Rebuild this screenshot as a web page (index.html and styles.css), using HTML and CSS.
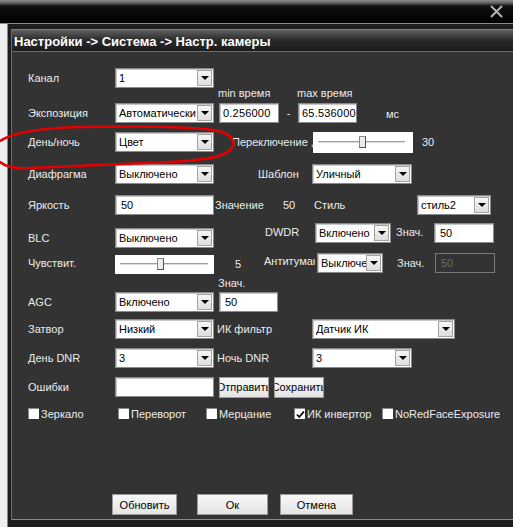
FILE: index.html
```html
<!DOCTYPE html>
<html>
<head>
<meta charset="utf-8">
<link rel="stylesheet" href="styles.css">
</head>
<body>
<div class="topbar">
  <svg class="close" width="13" height="13" viewBox="0 0 13 13"><path d="M1 1L12 12M12 1L1 12" stroke="#b4b4b4" stroke-width="2"/></svg>
</div>
<div class="frame">
  <div class="strip"></div>
  <div class="panel">
    <div class="inner">
      <div class="titlebar">Настройки -&gt; Система -&gt; Настр. камеры</div>
      <div class="form">
        <div class="row r1">
          <span class="lbl">Канал</span>
          <div class="sel w99"><span class="val">1</span><span class="arr"></span></div>
        </div>
        <div class="sub sub1"><span class="s-min">min время</span><span class="s-max">max время</span></div>
        <div class="row r2">
          <span class="lbl">Экспозиция</span>
          <div class="sel w99"><span class="val">Автоматически</span><span class="arr"></span></div>
          <div class="inp w60 ml5 mono">0.256000</div>
          <span class="dash">-</span>
          <div class="inp w59 mono">65.536000</div>
          <span class="ms">мс</span>
        </div>
        <div class="row r3">
          <span class="lbl">День/ночь</span>
          <div class="sel w99"><span class="val">Цвет</span><span class="arr"></span></div>
          <span class="clip switch-lbl">Переключение ,</span>
          <div class="slider s-big"><span class="thumb"></span></div>
          <span class="num30">30</span>
        </div>
        <div class="row r4">
          <span class="lbl">Диафрагма</span>
          <div class="sel w99"><span class="val">Выключено</span><span class="arr"></span></div>
          <span class="tpl-lbl">Шаблон</span>
          <div class="sel w100"><span class="val">Уличный</span><span class="arr"></span></div>
        </div>
        <div class="row r5">
          <span class="lbl">Яркость</span>
          <div class="inp w99">50</div>
          <span class="val-lbl">Значение</span>
          <span class="val-num">50</span>
          <span class="style-lbl">Стиль</span>
          <div class="sel w74"><span class="val">стиль2</span><span class="arr"></span></div>
        </div>
        <div class="row r6">
          <span class="lbl low">BLC</span>
          <div class="sel w99 low"><span class="val">Выключено</span><span class="arr"></span></div>
          <span class="dwdr-lbl">DWDR</span>
          <div class="sel w76"><span class="val">Включено</span><span class="arr"></span></div>
          <span class="zn-lbl">Знач.</span>
          <div class="inp w60">50</div>
        </div>
        <div class="row r7">
          <span class="lbl">Чувствит.</span>
          <div class="slider s-small"><span class="thumb"></span></div>
          <span class="num5">5</span>
          <span class="clip fog-lbl">Антитуман</span>
          <div class="sel w66"><span class="val">Выключено</span><span class="arr"></span></div>
          <span class="zn-lbl">Знач.</span>
          <div class="inp w60 disabled">50</div>
        </div>
        <div class="sub sub2"><span>Знач.</span></div>
        <div class="row r8">
          <span class="lbl">AGC</span>
          <div class="sel w99"><span class="val">Включено</span><span class="arr"></span></div>
          <div class="inp w59 ml5">50</div>
        </div>
        <div class="row r9">
          <span class="lbl">Затвор</span>
          <div class="sel w99"><span class="val">Низкий</span><span class="arr"></span></div>
          <span class="mid-lbl">ИК фильтр</span>
          <div class="sel w143"><span class="val">Датчик ИК</span><span class="arr"></span></div>
        </div>
        <div class="row r10">
          <span class="lbl">День DNR</span>
          <div class="sel w99"><span class="val">3</span><span class="arr"></span></div>
          <span class="mid-lbl">Ночь DNR</span>
          <div class="sel w100"><span class="val">3</span><span class="arr"></span></div>
        </div>
        <div class="row r11">
          <span class="lbl">Ошибки</span>
          <div class="inp w99"></div>
          <div class="btn w50 ml5">Отправить</div>
          <div class="btn w50 ml5">Сохранить</div>
        </div>
        <div class="checks">
          <label class="chk c1"><span class="box"></span>Зеркало</label>
          <label class="chk c2"><span class="box"></span>Переворот</label>
          <label class="chk c2"><span class="box"></span>Мерцание</label>
          <label class="chk c2"><span class="box"><svg width="9" height="9" viewBox="0 0 9 9"><path d="M1 4.5L3.3 7L8 1.5" stroke="#000" stroke-width="1.8" fill="none"/></svg></span>ИК инвертор</label>
          <label class="chk"><span class="box"></span>NoRedFaceExposure</label>
        </div>
        <div class="actions">
          <div class="btn b-upd">Обновить</div>
          <div class="btn b-ok">Ок</div>
          <div class="btn b-cancel">Отмена</div>
        </div>
      </div>
    </div>
  </div>
</div>
<svg class="annot" width="240" height="60" viewBox="0 120 240 60">
  <path d="M0 141 C 14 132 40 128 80 127 C 130 126 185 126 214 130 C 230 133 236 140 232 148 C 226 157 205 160 170 162 C 120 164 70 166 30 168 C 15 169 5 166 0 162" fill="none" stroke="#e40000" stroke-width="2.6" stroke-linecap="round"/>
</svg>
</body>
</html>
```
FILE: styles.css
```css
html, body {
  margin: 0;
  padding: 0;
}
body {
  width: 513px;
  height: 527px;
  overflow: hidden;
  background: #262626;
  font-family: "Liberation Sans", Arial, sans-serif;
  font-size: 11px;
  color: #ececec;
  position: relative;
}
.topbar {
  height: 23px;
  background: linear-gradient(#8e8e8e 0, #606060 3px, #101010 6px, #000 23px);
  display: flex;
  justify-content: flex-end;
  align-items: center;
  padding-right: 10px;
}
.close {
  display: block;
}
.frame {
  display: flex;
  height: 503px;
  border-top: 1px solid #8a8a8a;
}
.strip {
  width: 7px;
  background: #efefef;
}
.panel {
  flex: 1;
  border-left: 1px solid #8a8a8a;
  padding-left: 3px;
  padding-top: 5px;
  background: #1e1e1e;
}
.inner {
  height: 490px;
  border-left: 1px solid #6e6e6e;
  border-bottom: 1px solid #8c8c8c;
  background: #333333;
}
.titlebar {
  height: 21px;
  border-top: 1px solid #7e7e7e;
  border-bottom: 1px solid #6c6c6c;
  background: linear-gradient(#606060 0, #4a4a4a 4px, #2a2a2a 10px, #1c1c1c 21px);
  color: #fff;
  font-weight: bold;
  font-size: 13px;
  line-height: 23px;
  padding-left: 2px;
  white-space: nowrap;
}
.form {
  padding-left: 16px;
}
.row {
  display: flex;
  align-items: center;
  height: 20px;
}
.lbl {
  width: 87px;
  flex: none;
}
.r1 { margin-top: 16px; }
.sub {
  height: 10px;
  line-height: 10px;
  display: flex;
}
.s-min { margin-left: 190px; width: 79px; }
.r2 { margin-top: 5px; }
.r3 { margin-top: 9px; }
.r4 { margin-top: 12px; }
.r5 { margin-top: 11px; }
.r6 { margin-top: 8px; height: 25px; align-items: flex-start; }
.r6 .lbl.low { line-height: 20px; margin-top: 5px; }
.r6 .sel.low { margin-top: 5px; }
.r6 .dwdr-lbl, .r6 .zn-lbl { line-height: 20px; margin-top: -1px; }
.r7 { margin-top: 4px; height: 21px; }
.sub2 { margin-top: 4px; height: 12px; line-height: 12px; padding-left: 190px; }
.r8 { margin-top: 3px; }
.r9 { margin-top: 7px; }
.r10 { margin-top: 9px; }
.r11 { margin-top: 9px; }

.sel {
  display: flex;
  align-items: center;
  height: 20px;
  box-sizing: border-box;
  background: #fff;
  border: 1px solid #8a8a8a;
  box-shadow: inset 1px 1px 0 #c8c8c8;
  color: #000;
  padding-left: 3px;
  flex: none;
}
.val {
  flex: 1;
  overflow: hidden;
  white-space: nowrap;
}
.arr {
  width: 15px;
  height: 16px;
  box-sizing: border-box;
  border: 1px solid #a4a4a4;
  background: linear-gradient(#f6f6f6, #dedede);
  margin-right: 1px;
  display: flex;
  align-items: center;
  justify-content: center;
  flex: none;
}
.arr::after {
  content: "";
  border-left: 4px solid transparent;
  border-right: 4px solid transparent;
  border-top: 4px solid #000;
}
.inp {
  height: 20px;
  box-sizing: border-box;
  border: 1px solid #8a8a8a;
  box-shadow: inset 1px 1px 0 #c8c8c8;
  background: #fff;
  color: #000;
  padding-left: 5px;
  line-height: 18px;
  flex: none;
  white-space: nowrap;
  overflow: hidden;
}
.inp.disabled {
  background: #333;
  border-color: #7a7a7a;
  box-shadow: none;
  color: #6a6a6a;
}
.mono { letter-spacing: 0.2px; padding-left: 3px; }
.w50 { width: 50px; }
.w59 { width: 59px; }
.w60 { width: 60px; }
.w66 { width: 66px; }
.w74 { width: 74px; }
.w76 { width: 76px; }
.w99 { width: 99px; }
.w100 { width: 100px; }
.w143 { width: 143px; }
.ml5 { margin-left: 5px; }
.dash { width: 19px; text-align: center; flex: none; }
.ms { margin-left: 29px; margin-top: 2px; }
.clip { overflow: hidden; white-space: nowrap; flex: none; }
.switch-lbl { margin-left: 18px; width: 81px; }
.slider {
  flex: none;
  background: #fff;
  display: flex;
  align-items: center;
  box-sizing: border-box;
}
.s-big {
  width: 100px;
  height: 21px;
  padding-left: 46px;
  background-image: linear-gradient(to bottom, transparent 9px, #a0a0a0 9px, #a0a0a0 10px, #dcdcdc 10px, #dcdcdc 11px, transparent 11px);
  background-size: 87px 21px;
  background-position: 5px 0;
  background-repeat: no-repeat;
}
.s-small {
  width: 99px;
  height: 19px;
  margin-top: 3px;
  padding-left: 42px;
  background-image: linear-gradient(to bottom, transparent 8px, #a0a0a0 8px, #a0a0a0 9px, #dcdcdc 9px, #dcdcdc 10px, transparent 10px);
  background-size: 88px 19px;
  background-position: 5px 0;
  background-repeat: no-repeat;
}
.thumb {
  width: 7px;
  height: 12px;
  box-sizing: border-box;
  border: 1px solid #8a8a8a;
  border-right-color: #555;
  border-bottom-color: #555;
  background: #ececec;
}
.num30 { margin-left: 9px; }
.tpl-lbl { margin-left: 44px; width: 54px; }
.val-lbl { margin-left: 1px; width: 68px; }
.val-num { width: 31px; }
.style-lbl { width: 103px; }
.dwdr-lbl { margin-left: 51px; width: 50px; }
.zn-lbl { margin-left: 5px; width: 38px; flex: none; }
.r7 .zn-lbl { margin-left: 14px; }
.num5 { margin-left: 21px; width: 29px; margin-top: 3px; }
.fog-lbl { width: 51px; margin-right: 2px; margin-top: -4px; }
.mid-lbl { margin-left: 3px; width: 95px; }
.btn {
  height: 21px;
  box-sizing: border-box;
  border: 1px solid #9a9a9a;
  background: linear-gradient(#f8f8f8, #e4e4e4);
  color: #000;
  display: flex;
  align-items: center;
  justify-content: center;
  overflow: hidden;
  white-space: nowrap;
  flex: none;
}
.checks {
  display: flex;
  align-items: center;
  margin-top: 10px;
  height: 13px;
  padding-left: 0;
}
.chk {
  display: flex;
  align-items: center;
  flex: none;
}
.chk.c1 { width: 90px; }
.chk.c2 { width: 88px; }
.box {
  width: 11px;
  height: 11px;
  box-sizing: border-box;
  background: #fff;
  border-left: 1px solid #8a8a8a;
  border-top: 1px solid #8a8a8a;
  margin-right: 2px;
  display: flex;
  align-items: center;
  justify-content: center;
}
.actions {
  display: flex;
  margin-top: 74px;
  padding-left: 84px;
}
.b-upd { width: 65px; }
.b-ok { width: 71px; margin-left: 20px; }
.b-cancel { width: 73px; margin-left: 12px; }
.annot {
  position: absolute;
  left: 0;
  top: 120px;
  pointer-events: none;
}
```
